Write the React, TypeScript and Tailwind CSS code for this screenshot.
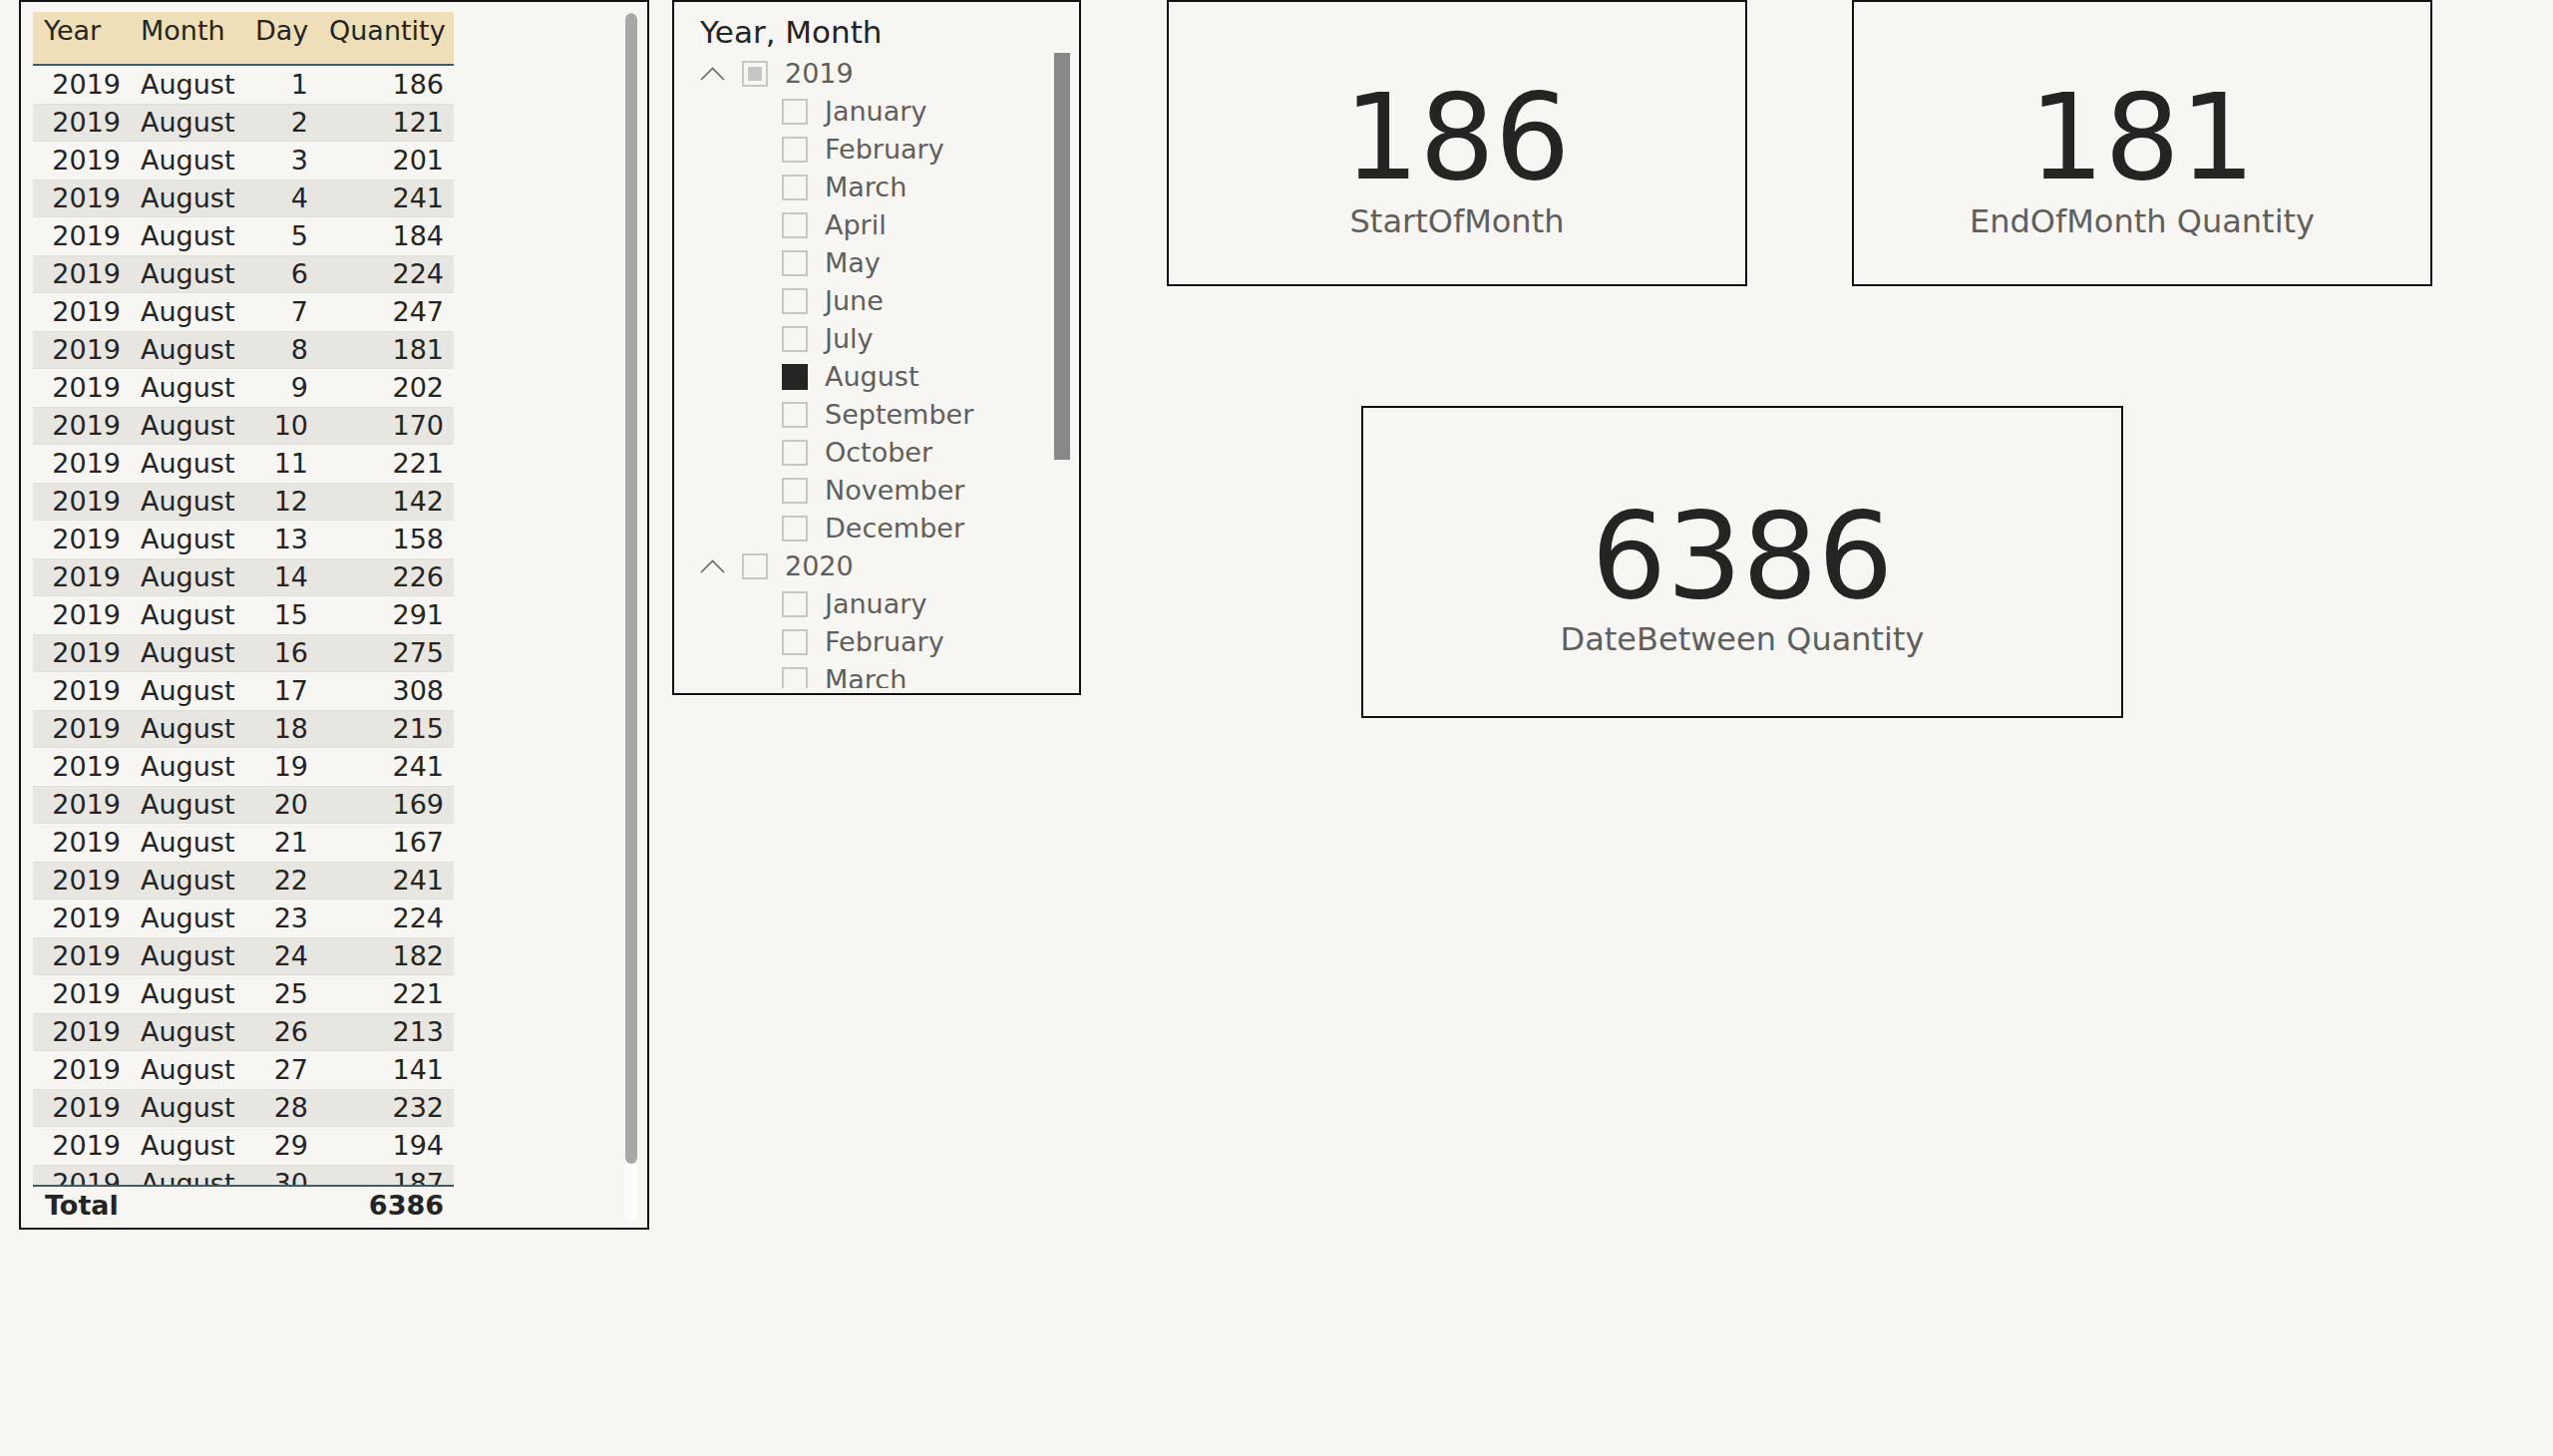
import React from "react"

const ROWS: [number, number][] = [
  [1, 186], [2, 121], [3, 201], [4, 241], [5, 184], [6, 224], [7, 247], [8, 181],
  [9, 202], [10, 170], [11, 221], [12, 142], [13, 158], [14, 226], [15, 291],
  [16, 275], [17, 308], [18, 215], [19, 241], [20, 169], [21, 167], [22, 241],
  [23, 224], [24, 182], [25, 221], [26, 213], [27, 141], [28, 232], [29, 194],
  [30, 187],
]

const MONTHS = [
  "January", "February", "March", "April", "May", "June", "July",
  "August", "September", "October", "November", "December",
]

function Chevron() {
  return (
    <svg width="25" height="14" viewBox="0 0 25 14" className="shrink-0">
      <polyline points="1,13 12.5,1.5 24,13" fill="none" stroke="#6b6966" strokeWidth="1.6" />
    </svg>
  )
}

function Box({ state }: { state: "none" | "partial" | "checked" }) {
  if (state === "checked") {
    return <div className="w-[26px] h-[26px] shrink-0 bg-[#252423]" />
  }
  return (
    <div className="w-[26px] h-[26px] shrink-0 border-2 border-[#c8c6c4] flex items-center justify-center">
      {state === "partial" && <div className="w-[14px] h-[14px] bg-[#c8c6c4]" />}
    </div>
  )
}

function TableVisual() {
  return (
    <div className="w-[632px] h-[1233px] border-2 border-[#111] flex shrink-0">
      <div className="ml-[12px] mt-[10px] w-[422px] flex flex-col text-[27px] text-[#252423]">
        {/* header */}
        <div className="h-[54px] bg-[#eedfb8] border-b-2 border-[#3e5c63] flex leading-[38px]">
          <div className="w-[97px] pl-[11px]">Year</div>
          <div className="w-[115px] pl-[11px]">Month</div>
          <div className="w-[73px] pl-[11px]">Day</div>
          <div className="w-[137px] pl-[12px]">Quantity</div>
        </div>

        {/* body */}
        <div className="h-[1122px] overflow-hidden">
          {ROWS.map(([day, qty], i) => (
            <div
              key={day}
              className={
                i % 2 === 1
                  ? "h-[38px] flex leading-[38px] bg-[#e7e6e1] shadow-[inset_0_1px_0_#dfded9,inset_0_-1px_0_#dfded9]"
                  : "h-[38px] flex leading-[38px]"
              }
            >
              <div className="w-[97px] pr-[9px] text-right">2019</div>
              <div className="w-[115px] pl-[11px]">August</div>
              <div className="w-[73px] pr-[9px] text-right">{day}</div>
              <div className="w-[137px] pr-[10px] text-right">{qty}</div>
            </div>
          ))}
        </div>

        {/* total */}
        <div className="border-t-2 border-[#3e5c63] h-[40px] flex leading-[38px] font-bold">
          <div className="flex-1 pl-[12px]">Total</div>
          <div className="pr-[10px]">6386</div>
        </div>
      </div>

      {/* scrollbar */}
      <div className="ml-auto mr-[10px] mt-[11px] w-[12px] h-[1212px] rounded-full bg-[#fcfcfa] overflow-hidden">
        <div className="h-[1154px] rounded-full bg-[#a8a8a6]" />
      </div>
    </div>
  )
}

function SlicerVisual() {
  const years = [
    { year: "2019", state: "partial" as const, months: MONTHS },
    { year: "2020", state: "none" as const, months: MONTHS.slice(0, 3) },
  ]
  return (
    <div className="ml-[23px] w-[410px] h-[697px] border-2 border-[#111] flex flex-col shrink-0">
      <div className="pt-[15px] pl-[26px] text-[31px] leading-none text-[#252423]">Year, Month</div>
      <div className="mt-[7px] flex flex-1 min-h-0 pb-[5px]">
        <div className="flex-1 overflow-hidden pl-[26px] text-[27px] text-[#605e5c] leading-[38px]">
          {years.map((y) => (
            <div key={y.year}>
              <div className="h-[38px] flex items-center">
                <Chevron />
                <div className="ml-[17px]">
                  <Box state={y.state} />
                </div>
                <span className="ml-[17px]">{y.year}</span>
              </div>
              {y.months.map((m) => (
                <div key={m} className="h-[38px] flex items-center pl-[82px]">
                  <Box state={y.year === "2019" && m === "August" ? "checked" : "none"} />
                  <span className="ml-[17px]">{m}</span>
                </div>
              ))}
            </div>
          ))}
        </div>
        <div className="w-[16px] h-[408px] bg-[#888888] mr-[9px] -mt-[2px] shrink-0" />
      </div>
    </div>
  )
}

function CardVisual({
  value,
  label,
  className,
  pad,
  gap,
}: {
  value: string
  label: string
  className: string
  pad: string
  gap: string
}) {
  return (
    <div className={`border-2 border-[#111] flex flex-col items-center shrink-0 ${className} ${pad}`}>
      <div className="text-[119px] leading-none text-[#252423]">{value}</div>
      <div className={`text-[32px] leading-none text-[#605e5c] ${gap}`}>{label}</div>
    </div>
  )
}

export default function App() {
  return (
    <div className="min-h-screen bg-[#f7f6f2] font-['DejaVu_Sans',Verdana,sans-serif]">
      <div className="flex items-start pl-[19px]">
        <TableVisual />
        <SlicerVisual />

        <div className="ml-[86px] flex flex-col items-start">
          <div className="flex">
            <CardVisual
              value="186"
              label="StartOfMonth"
              className="w-[582px] h-[287px]"
              pad="pt-[77px]"
              gap="mt-[8px]"
            />
            <CardVisual
              value="181"
              label="EndOfMonth Quantity"
              className="ml-[105px] w-[582px] h-[287px]"
              pad="pt-[77px]"
              gap="mt-[8px]"
            />
          </div>
          <CardVisual
            value="6386"
            label="DateBetween Quantity"
            className="mt-[120px] ml-[195px] w-[764px] h-[313px]"
            pad="pt-[90px]"
            gap="mt-[7px]"
          />
        </div>
      </div>
    </div>
  )
}
